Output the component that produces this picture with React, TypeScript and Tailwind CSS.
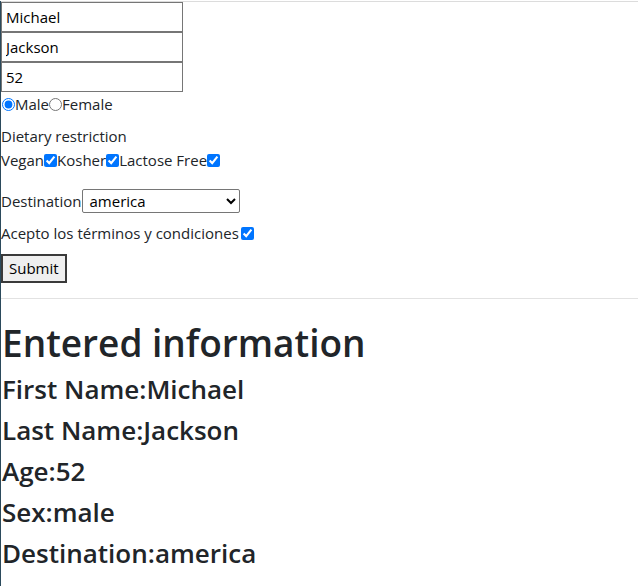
import React, { useState } from 'react';

const App: React.FC = () => {
  const [firstName, setFirstName] = useState('Michael');
  const [lastName, setLastName] = useState('Jackson');
  const [age, setAge] = useState('52');
  const [sex, setSex] = useState('male');
  const [diet, setDiet] = useState({ vegan: true, kosher: true, lactose: true });
  const [destination, setDestination] = useState('america');
  const [accept, setAccept] = useState(true);

  const rowText = 'text-[26px] font-semibold leading-[41px]';

  return (
    <div
      className="min-h-[586px] border-l border-[#2b4a5c] bg-white text-[#212529]"
      style={{ fontFamily: '"Open Sans", "Noto Sans", sans-serif' }}
    >
      <div className="mt-[1px] border-t border-[#dcdcdc]" />
      <form className="text-[15px]" onSubmit={(e) => e.preventDefault()}>
        <input
          className="block h-[30px] w-[182px] border border-[#767676] px-[4px] text-[15px] text-black"
          value={firstName}
          onChange={(e) => setFirstName(e.target.value)}
        />
        <input
          className="block h-[30px] w-[182px] border border-[#767676] px-[4px] text-[15px] text-black"
          value={lastName}
          onChange={(e) => setLastName(e.target.value)}
        />
        <input
          className="block h-[30px] w-[182px] border border-[#767676] px-[4px] text-[15px] text-black"
          value={age}
          onChange={(e) => setAge(e.target.value)}
        />
        <div className="flex h-[24px] items-center">
          <input
            type="radio"
            className="m-0 ml-[1px] h-[13px] w-[13px]"
            checked={sex === 'male'}
            onChange={() => setSex('male')}
          />
          <span>Male</span>
          <input
            type="radio"
            className="m-0 h-[13px] w-[13px]"
            checked={sex === 'female'}
            onChange={() => setSex('female')}
          />
          <span>Female</span>
        </div>

        <p className="mt-[8px] flex h-[24px] items-center">Dietary restriction</p>
        <div className="flex h-[24px] items-center">
          <span>Vegan</span>
          <input
            type="checkbox"
            className="m-0 h-[13px] w-[13px]"
            checked={diet.vegan}
            onChange={(e) => setDiet({ ...diet, vegan: e.target.checked })}
          />
          <span>Kosher</span>
          <input
            type="checkbox"
            className="m-0 h-[13px] w-[13px]"
            checked={diet.kosher}
            onChange={(e) => setDiet({ ...diet, kosher: e.target.checked })}
          />
          <span>Lactose Free</span>
          <input
            type="checkbox"
            className="m-0 h-[13px] w-[13px]"
            checked={diet.lactose}
            onChange={(e) => setDiet({ ...diet, lactose: e.target.checked })}
          />
        </div>

        <div className="mt-[17px] flex h-[24px] items-center">
          <span>Destination</span>
          <select
            className="ml-[1px] h-[24px] w-[158px] rounded-[2px] border border-[#767676] bg-white pl-[2px] text-[15px] text-black"
            style={{ appearance: 'auto' }}
            value={destination}
            onChange={(e) => setDestination(e.target.value)}
          >
            <option value="america">america</option>
            <option value="europe">europe</option>
            <option value="asia">asia</option>
          </select>
        </div>

        <div className="mt-[8px] flex h-[24px] items-center">
          <span>Acepto los términos y condiciones</span>
          <input
            type="checkbox"
            className="m-0 ml-[2px] h-[13px] w-[13px]"
            checked={accept}
            onChange={(e) => setAccept(e.target.checked)}
          />
        </div>

        <button
          type="submit"
          className="mt-[9px] h-[29px] border-2 border-[#3a3a3a] bg-[#efefef] px-[6px] text-[15px] text-black"
        >
          Submit
        </button>
      </form>

      <hr className="mt-[15px] border-t border-[#e2e2e2]" />

      <div className="pl-[1px]">
        <h1 className="mt-[18px] text-[37px] font-semibold leading-[52px]">Entered information</h1>
        <h3 className={rowText}>First Name:{firstName}</h3>
        <h3 className={rowText}>Last Name:{lastName}</h3>
        <h3 className={rowText}>Age:{age}</h3>
        <h3 className={rowText}>Sex:{sex}</h3>
        <h3 className={rowText}>Destination:{destination}</h3>
      </div>
    </div>
  );
};

export default App;
